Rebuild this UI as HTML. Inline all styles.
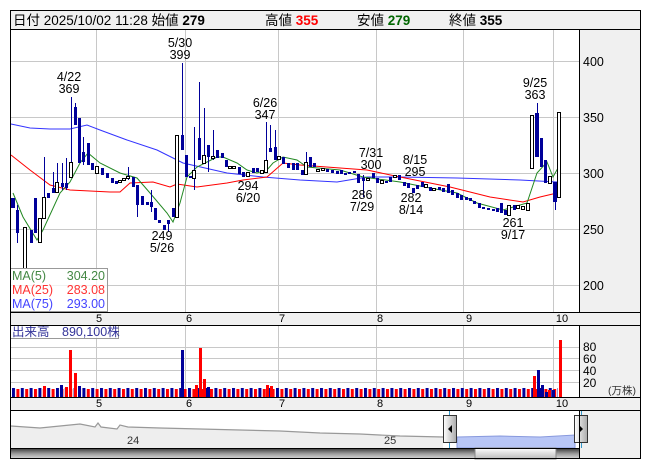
<!DOCTYPE html>
<html><head><meta charset="utf-8"><style>
body{margin:0;background:#fff;width:653px;height:470px;overflow:hidden;font-family:"Liberation Sans","Noto Sans CJK JP",sans-serif}
svg text{font-family:"Liberation Sans","Noto Sans CJK JP",sans-serif}
</style></head><body>
<svg width="653" height="470" xmlns="http://www.w3.org/2000/svg">
<defs>
<pattern id="vp" x="12" y="0" width="8.8" height="470" patternUnits="userSpaceOnUse">
<rect x="0" y="388" width="3" height="9" fill="#000099"/>
<rect x="4.4" y="389" width="3" height="8" fill="#ff0000"/>
</pattern>
<linearGradient id="sb" x1="0" y1="0" x2="0" y2="1"><stop offset="0" stop-color="#333"/><stop offset="0.5" stop-color="#999"/><stop offset="1" stop-color="#ddd"/></linearGradient>
<linearGradient id="th" x1="0" y1="0" x2="0" y2="1"><stop offset="0" stop-color="#fff"/><stop offset="1" stop-color="#bbb"/></linearGradient>
<linearGradient id="hd" x1="0" y1="0" x2="1" y2="0"><stop offset="0" stop-color="#fff"/><stop offset="1" stop-color="#aaa"/></linearGradient>
</defs>
<!-- header -->
<rect x="10.5" y="10.5" width="630" height="19" fill="#f0f0f0" stroke="#000"/>
<text x="13" y="25" font-size="13.5" fill="#000">日付 2025/10/02 11:28 始値 <tspan font-weight="bold">279</tspan></text>
<text x="265" y="25" font-size="13.5" fill="#000">高値 <tspan font-weight="bold" fill="#ff0000">355</tspan></text>
<text x="357" y="25" font-size="13.5" fill="#000">安値 <tspan font-weight="bold" fill="#006600">279</tspan></text>
<text x="449" y="25" font-size="13.5" fill="#000">終値 <tspan font-weight="bold">355</tspan></text>
<!-- right axes bg -->
<rect x="579" y="30" width="61" height="282" fill="#f0f0f0"/>
<rect x="579" y="325" width="61" height="72" fill="#f0f0f0"/>
<rect x="579" y="410" width="61" height="49" fill="#f0f0f0"/>
<rect x="11" y="312" width="629" height="13" fill="#f0f0f0"/>
<rect x="11" y="397" width="629" height="13" fill="#f0f0f0"/>
<!-- grid chart -->
<g stroke="#c8c8c8" stroke-width="1">
<line x1="11" y1="61.5" x2="579" y2="61.5"/><line x1="11" y1="117.5" x2="579" y2="117.5"/><line x1="11" y1="173.5" x2="579" y2="173.5"/><line x1="11" y1="229.5" x2="579" y2="229.5"/><line x1="11" y1="285.5" x2="579" y2="285.5"/>
<line x1="96.5" y1="30" x2="96.5" y2="312"/><line x1="185.5" y1="30" x2="185.5" y2="312"/><line x1="278.5" y1="30" x2="278.5" y2="312"/><line x1="376.5" y1="30" x2="376.5" y2="312"/><line x1="463.5" y1="30" x2="463.5" y2="312"/><line x1="553.5" y1="30" x2="553.5" y2="312"/>
<line x1="11" y1="347.5" x2="579" y2="347.5"/><line x1="11" y1="358.5" x2="579" y2="358.5"/><line x1="11" y1="370.5" x2="579" y2="370.5"/><line x1="11" y1="382.5" x2="579" y2="382.5"/>
<line x1="96.5" y1="325" x2="96.5" y2="397"/><line x1="185.5" y1="325" x2="185.5" y2="397"/><line x1="278.5" y1="325" x2="278.5" y2="397"/><line x1="376.5" y1="325" x2="376.5" y2="397"/><line x1="463.5" y1="325" x2="463.5" y2="397"/><line x1="553.5" y1="325" x2="553.5" y2="397"/>
</g>
<!-- axis labels -->
<g font-size="12.5" fill="#000">
<text x="583" y="66">400</text><text x="583" y="122">350</text><text x="583" y="178">300</text><text x="583" y="234">250</text><text x="583" y="290">200</text>
<text x="583" y="351" font-size="12">80</text><text x="583" y="363" font-size="12">60</text><text x="583" y="375" font-size="12">40</text><text x="583" y="387" font-size="12">20</text>
<text x="608" y="394" font-size="10.5" fill="#333">(万株)</text>
</g>
<g font-size="11" fill="#000" text-anchor="middle">
<text x="99" y="322">5</text><text x="189" y="322">6</text><text x="282" y="322">7</text><text x="380" y="322">8</text><text x="469" y="322">9</text><text x="562" y="322">10</text>
<text x="99" y="407">5</text><text x="189" y="407">6</text><text x="282" y="407">7</text><text x="380" y="407">8</text><text x="469" y="407">9</text><text x="562" y="407">10</text>
</g>
<!-- MA lines -->
<polyline fill="none" stroke="#3333ff" stroke-width="1" points="11,124 30,128 50,129 70,129 87,125 100,130 127,140 157,150 183,163 227,173 263,177 300,180 337,182 367,177 400,177 457,178 520,180 557,182"/>
<polyline fill="none" stroke="#ff0000" stroke-width="1" points="11,155 30,170 50,185 70,190 110,192 120,192 130,183 153,182 170,187 177,184 197,187 227,183 243,180 267,177 283,163 300,165 340,168 367,170 400,177 450,187 490,197 523,202 540,197 557,193"/>
<polyline fill="none" stroke="#228822" stroke-width="1" points="13,193 23,217 37,240 43,230 60,193 70,182 80,163 88,153 100,163 120,173 137,178 150,193 167,213 173,222 180,203 187,177 197,167 217,157 223,157 237,163 247,170 257,173 267,170 273,163 283,157 297,160 307,167 340,170 363,177 400,182 430,188 457,193 477,203 503,210 527,203 537,173 547,162 553,177 558,168"/>
<!-- candles: wicks -->
<g stroke="#000099" stroke-width="1">
<line x1="17.5" y1="205" x2="17.5" y2="243"/><line x1="44.5" y1="157" x2="44.5" y2="218"/><line x1="53.5" y1="172" x2="53.5" y2="193"/><line x1="57.5" y1="163" x2="57.5" y2="185"/><line x1="62.5" y1="163" x2="62.5" y2="190"/><line x1="66.5" y1="158" x2="66.5" y2="190"/>
<line x1="71.5" y1="97" x2="71.5" y2="177"/><line x1="75.5" y1="103" x2="75.5" y2="125"/><line x1="83.5" y1="137" x2="83.5" y2="165"/><line x1="128.5" y1="167" x2="128.5" y2="180"/><line x1="137.5" y1="185" x2="137.5" y2="217"/><line x1="151.5" y1="190" x2="151.5" y2="212"/><line x1="168.5" y1="220" x2="168.5" y2="232"/>
<line x1="182.5" y1="63" x2="182.5" y2="150"/><line x1="194.5" y1="127" x2="194.5" y2="190"/><line x1="199.5" y1="82" x2="199.5" y2="160"/><line x1="204.5" y1="108" x2="204.5" y2="164"/><line x1="208.5" y1="145" x2="208.5" y2="172"/><line x1="213.5" y1="130" x2="213.5" y2="160"/>
<line x1="266.5" y1="122" x2="266.5" y2="172"/><line x1="270.5" y1="125" x2="270.5" y2="152"/><line x1="275.5" y1="130" x2="275.5" y2="160"/><line x1="306.5" y1="152" x2="306.5" y2="175"/><line x1="363.5" y1="175" x2="363.5" y2="197"/><line x1="537.5" y1="103" x2="537.5" y2="157"/><line x1="555.5" y1="182" x2="555.5" y2="210"/>
</g>
<g fill="#000099">
<rect x="11" y="198" width="4" height="10"/><rect x="16" y="210" width="3" height="23"/><rect x="30" y="230" width="3" height="13"/><rect x="34" y="198" width="3" height="35"/><rect x="47" y="193" width="3" height="5"/><rect x="52" y="188" width="3" height="5"/><rect x="61" y="183" width="3" height="4"/><rect x="65" y="183" width="3" height="5"/>
<rect x="74" y="107" width="3" height="18"/><rect x="78" y="118" width="3" height="45"/><rect x="82" y="152" width="3" height="10"/><rect x="87" y="143" width="3" height="22"/><rect x="91" y="163" width="3" height="7"/><rect x="101" y="168" width="3" height="7"/><rect x="106" y="173" width="3" height="5"/><rect x="111" y="178" width="3" height="5"/><rect x="115" y="181" width="3" height="3"/>
<rect x="132" y="177" width="3" height="10"/><rect x="136" y="185" width="3" height="20"/><rect x="141" y="196" width="3" height="9"/><rect x="146" y="202" width="3" height="3"/><rect x="150" y="202" width="3" height="5"/><rect x="154" y="208" width="3" height="12"/><rect x="158" y="220" width="3" height="3"/><rect x="163" y="225" width="3" height="5"/><rect x="167" y="220" width="3" height="4"/><rect x="172" y="208" width="3" height="9"/>
<rect x="181" y="135" width="3" height="15"/><rect x="185" y="155" width="3" height="22"/><rect x="189" y="176" width="3" height="2"/><rect x="198" y="138" width="3" height="22"/><rect x="207" y="145" width="3" height="12"/><rect x="216" y="150" width="3" height="8"/><rect x="221" y="153" width="3" height="5"/><rect x="225" y="160" width="3" height="7"/><rect x="238" y="167" width="3" height="7"/><rect x="242" y="172" width="3" height="5"/><rect x="252" y="168" width="3" height="5"/><rect x="256" y="168" width="3" height="4"/>
<rect x="269" y="148" width="3" height="4"/><rect x="274" y="147" width="3" height="13"/><rect x="282" y="157" width="3" height="7"/><rect x="287" y="163" width="3" height="5"/><rect x="292" y="163" width="3" height="7"/><rect x="296" y="163" width="3" height="7"/><rect x="301" y="170" width="3" height="5"/><rect x="309" y="157" width="3" height="10"/><rect x="313" y="163" width="3" height="4"/>
<rect x="326" y="169" width="3" height="3"/><rect x="331" y="170" width="3" height="3"/><rect x="336" y="171" width="3" height="3"/><rect x="340" y="170" width="3" height="4"/><rect x="344" y="173" width="3" height="2"/><rect x="348" y="172" width="3" height="2"/><rect x="353" y="171" width="3" height="2"/><rect x="357" y="174" width="3" height="9"/><rect x="362" y="178" width="3" height="3"/><rect x="372" y="173" width="3" height="5"/><rect x="376" y="178" width="3" height="5"/><rect x="385" y="181" width="3" height="2"/><rect x="389" y="177" width="3" height="5"/>
<rect x="398" y="175" width="3" height="5"/><rect x="403" y="182" width="3" height="4"/><rect x="407" y="183" width="3" height="5"/><rect x="412" y="188" width="3" height="5"/><rect x="416" y="185" width="3" height="4"/><rect x="421" y="182" width="3" height="5"/><rect x="429" y="187" width="3" height="4"/><rect x="438" y="187" width="3" height="3"/><rect x="442" y="188" width="3" height="4"/><rect x="447" y="184" width="3" height="9"/><rect x="451" y="190" width="3" height="5"/><rect x="456" y="193" width="3" height="5"/><rect x="460" y="195" width="3" height="5"/><rect x="465" y="197" width="3" height="3"/><rect x="469" y="198" width="3" height="3"/><rect x="473" y="201" width="3" height="3"/><rect x="478" y="203" width="3" height="5"/><rect x="482" y="207" width="3" height="2"/><rect x="487" y="208" width="3" height="2"/><rect x="492" y="209" width="3" height="2"/><rect x="496" y="208" width="3" height="4"/><rect x="500" y="203" width="3" height="10"/><rect x="504" y="210" width="3" height="5"/><rect x="513" y="205" width="3" height="5"/>
<rect x="535" y="113" width="4" height="44"/><rect x="540" y="138" width="3" height="29"/><rect x="544" y="160" width="3" height="23"/><rect x="553" y="182" width="4" height="20"/>
</g>
<g fill="#fff" stroke="#000" stroke-width="1">
<rect x="23.5" y="227.5" width="3" height="41"/><rect x="38.5" y="218.5" width="3" height="24"/><rect x="42.5" y="197.5" width="3" height="21"/><rect x="55.5" y="182.5" width="3" height="10"/><rect x="69.5" y="162.5" width="3" height="15"/><rect x="95.5" y="166.5" width="3" height="7"/>
<rect x="118.5" y="180.5" width="3" height="2"/><rect x="122.5" y="178.5" width="3" height="2"/><rect x="126.5" y="176.5" width="3" height="2"/><rect x="175.5" y="135.5" width="3" height="82"/><rect x="192.5" y="170.5" width="3" height="8"/><rect x="202.5" y="155.5" width="3" height="8"/><rect x="211.5" y="156.5" width="3" height="2"/>
<rect x="228.5" y="166.5" width="3" height="2"/><rect x="232.5" y="166.5" width="3" height="2"/><rect x="246.5" y="172.5" width="3" height="4"/><rect x="260.5" y="170.5" width="3" height="3"/><rect x="264.5" y="160.5" width="3" height="12"/><rect x="277.5" y="156.5" width="3" height="3"/><rect x="304.5" y="162.5" width="3" height="12"/><rect x="316.5" y="169.5" width="3" height="2"/><rect x="321.5" y="168.5" width="3" height="2"/>
<rect x="366.5" y="178.5" width="3" height="2"/><rect x="380.5" y="180.5" width="3" height="3"/><rect x="393.5" y="175.5" width="3" height="2"/><rect x="424.5" y="184.5" width="3" height="3"/><rect x="432.5" y="188.5" width="3" height="2"/><rect x="507.5" y="205.5" width="3" height="10"/><rect x="516.5" y="205.5" width="3" height="3"/><rect x="521.5" y="206.5" width="3" height="3"/><rect x="526.5" y="203.5" width="3" height="7"/>
<rect x="530.5" y="115.5" width="3" height="53"/><rect x="548.5" y="176.5" width="3" height="7"/><rect x="557.5" y="112.5" width="3" height="85"/>
</g>
<!-- annotations -->
<g font-size="12.5" fill="#000" text-anchor="middle">
<text x="69" y="81">4/22</text><text x="69" y="93">369</text>
<text x="180" y="47">5/30</text><text x="180" y="59">399</text>
<text x="265" y="107">6/26</text><text x="265" y="119">347</text>
<text x="248" y="190">294</text><text x="248" y="202">6/20</text>
<text x="162" y="240">249</text><text x="162" y="252">5/26</text>
<text x="371" y="157">7/31</text><text x="371" y="169">300</text>
<text x="362" y="199">286</text><text x="362" y="211">7/29</text>
<text x="415" y="164">8/15</text><text x="415" y="176">295</text>
<text x="411" y="202">282</text><text x="411" y="214">8/14</text>
<text x="535" y="87">9/25</text><text x="535" y="99">363</text>
<text x="513" y="227">261</text><text x="513" y="239">9/17</text>
</g>
<!-- MA legend -->
<rect x="10.5" y="268.5" width="97" height="43" fill="#fff" fill-opacity="0.75" stroke="#999"/>
<g font-size="12.5">
<text x="12" y="280" fill="#448844">MA(5)</text><text x="105" y="280" fill="#448844" text-anchor="end">304.20</text>
<text x="12" y="294" fill="#ff3333">MA(25)</text><text x="105" y="294" fill="#ff3333" text-anchor="end">283.08</text>
<text x="12" y="308" fill="#4444ff">MA(75)</text><text x="105" y="308" fill="#4444ff" text-anchor="end">293.00</text>
</g>
<!-- volume -->
<rect x="12" y="385" width="546" height="12" fill="url(#vp)"/>
<g fill="#ff0000">
<rect x="69" y="350" width="3" height="47"/><rect x="74" y="373" width="3" height="24"/><rect x="199" y="348" width="3" height="49"/><rect x="203" y="379" width="3" height="18"/><rect x="195" y="385" width="3" height="12"/><rect x="43" y="386" width="3" height="11"/><rect x="65" y="387" width="3" height="10"/><rect x="266" y="385" width="3" height="12"/><rect x="270" y="386" width="3" height="11"/><rect x="533" y="376" width="3" height="21"/><rect x="559" y="340" width="3" height="57"/><rect x="548" y="390" width="3" height="7"/>
</g>
<g fill="#000099">
<rect x="181" y="350" width="3" height="47"/><rect x="537" y="370" width="3" height="27"/><rect x="541" y="385" width="3" height="12"/><rect x="60" y="385" width="3" height="12"/><rect x="78" y="386" width="3" height="11"/><rect x="545" y="392" width="3" height="5"/><rect x="552" y="390" width="3" height="7"/><rect x="207" y="387" width="3" height="10"/>
</g>
<rect x="10.5" y="325.5" width="108" height="13" fill="#fff" fill-opacity="0.75" stroke="#999"/>
<text x="12" y="336" font-size="12.5" fill="#333399">出来高　890,100株</text>
<!-- navigator -->
<path d="M11,426 L40,428 L60,426 L80,424 L95,427 L98,423 L101,427 L117,429 L120,425 L128,427 L160,428 L200,429 L240,430 L280,431 L320,433 L360,434 L400,436 L443,437 L443,448 L11,448 Z" fill="#eeeeee"/>
<polyline fill="none" stroke="#999" stroke-width="1.2" points="11,426 40,428 60,426 80,424 95,427 98,423 101,427 117,429 120,425 128,427 160,428 200,429 240,430 280,431 320,433 360,434 400,436 443,437"/>
<path d="M457,437 L500,436 L540,437 L575,435 L575,448 L457,448 Z" fill="#b8c6f6" stroke="#8899dd"/>
<text x="127" y="444" font-size="11" fill="#333">24</text><text x="384" y="444" font-size="11" fill="#333">25</text>
<line x1="449.5" y1="410" x2="449.5" y2="448" stroke="#3399cc"/><line x1="581.5" y1="410" x2="581.5" y2="448" stroke="#3399cc"/>
<rect x="443.5" y="415.5" width="13" height="27" fill="url(#hd)" stroke="#333"/><path d="M448,429 L452,425 L452,433 Z" fill="#000"/>
<rect x="574.5" y="415.5" width="13" height="27" fill="url(#hd)" stroke="#333"/><path d="M583,429 L579,425 L579,433 Z" fill="#000"/>
<rect x="11" y="448" width="568" height="11" fill="url(#sb)"/>
<rect x="475" y="448" width="81" height="11" fill="url(#th)" stroke="#888"/>
<!-- frame lines -->
<g stroke="#000" stroke-width="1" fill="none">
<rect x="10.5" y="10.5" width="630" height="448"/>
<line x1="579.5" y1="30" x2="579.5" y2="312"/><line x1="579.5" y1="325" x2="579.5" y2="397"/><line x1="579.5" y1="410" x2="579.5" y2="459"/>
<line x1="10" y1="312.5" x2="641" y2="312.5"/><line x1="10" y1="325.5" x2="641" y2="325.5"/><line x1="10" y1="397.5" x2="641" y2="397.5"/><line x1="10" y1="410.5" x2="641" y2="410.5"/><line x1="10" y1="448.5" x2="579" y2="448.5"/>
</g>
</svg>
</body></html>
